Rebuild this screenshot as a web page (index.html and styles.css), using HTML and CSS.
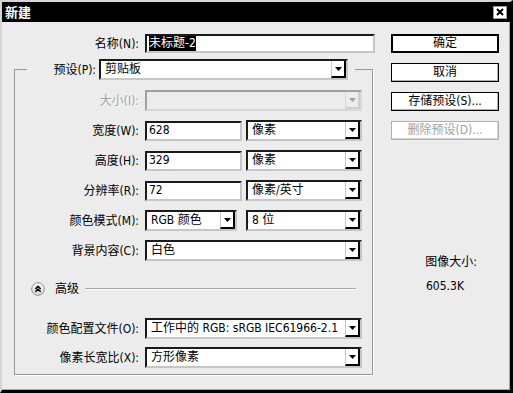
FILE: index.html
```html
<!DOCTYPE html>
<html lang="zh">
<head>
    <meta charset="UTF-8">
    <title>新建</title>
    <link rel="stylesheet" href="styles.css">
</head>
<body>
    <div class="window">
        <div class="titlebar">
            <span class="title">新建</span>
            <span class="close">
                <svg width="8" height="8" viewBox="0 0 8 8"><path d="M1 1L7 7M7 1L1 7" stroke="#000" stroke-width="2"/></svg>
            </span>
        </div>
        <div class="content">
            <div class="main">
                <div class="name-row">
                    <span class="label">名称(N):</span>
                    <div class="field name-field"><span class="selected">未标题-2</span></div>
                </div>
                <fieldset class="group">
                    <legend class="preset">
                        <span class="label preset-label">预设(P):</span>
                        <div class="field select preset-select">
                            <span class="value">剪贴板</span>
                            <span class="arrow"><svg width="7" height="4" viewBox="0 0 7 4"><path d="M0 0H7L3.5 4Z" fill="#000"/></svg></span>
                        </div>
                    </legend>
                    <div class="rows">
                        <div class="row">
                            <span class="label disabled">大小(I):</span>
                            <div class="field select wide off">
                                <span class="value"></span>
                                <span class="arrow"><svg width="7" height="4" viewBox="0 0 7 4"><path d="M0 0H7L3.5 4Z" fill="#a0a0a0"/></svg></span>
                            </div>
                        </div>
                        <div class="row">
                            <span class="label">宽度(W):</span>
                            <div class="field num"><span class="value">628</span></div>
                            <div class="field select unit">
                                <span class="value">像素</span>
                                <span class="arrow"><svg width="7" height="4" viewBox="0 0 7 4"><path d="M0 0H7L3.5 4Z" fill="#000"/></svg></span>
                            </div>
                        </div>
                        <div class="row">
                            <span class="label">高度(H):</span>
                            <div class="field num"><span class="value">329</span></div>
                            <div class="field select unit">
                                <span class="value">像素</span>
                                <span class="arrow"><svg width="7" height="4" viewBox="0 0 7 4"><path d="M0 0H7L3.5 4Z" fill="#000"/></svg></span>
                            </div>
                        </div>
                        <div class="row">
                            <span class="label">分辨率(R):</span>
                            <div class="field num"><span class="value">72</span></div>
                            <div class="field select unit">
                                <span class="value">像素/英寸</span>
                                <span class="arrow"><svg width="7" height="4" viewBox="0 0 7 4"><path d="M0 0H7L3.5 4Z" fill="#000"/></svg></span>
                            </div>
                        </div>
                        <div class="row">
                            <span class="label">颜色模式(M):</span>
                            <div class="field select mode">
                                <span class="value">RGB 颜色</span>
                                <span class="arrow"><svg width="7" height="4" viewBox="0 0 7 4"><path d="M0 0H7L3.5 4Z" fill="#000"/></svg></span>
                            </div>
                            <div class="field select unit">
                                <span class="value">8 位</span>
                                <span class="arrow"><svg width="7" height="4" viewBox="0 0 7 4"><path d="M0 0H7L3.5 4Z" fill="#000"/></svg></span>
                            </div>
                        </div>
                        <div class="row">
                            <span class="label">背景内容(C):</span>
                            <div class="field select wide">
                                <span class="value">白色</span>
                                <span class="arrow"><svg width="7" height="4" viewBox="0 0 7 4"><path d="M0 0H7L3.5 4Z" fill="#000"/></svg></span>
                            </div>
                        </div>
                    </div>
                    <div class="advanced">
                        <span class="toggle">
                            <svg width="14" height="14" viewBox="0 0 14 14">
                                <defs>
                                    <linearGradient id="tg" x1="0" y1="0" x2="0" y2="1">
                                        <stop offset="0" stop-color="#ffffff"/>
                                        <stop offset="1" stop-color="#d6d6d6"/>
                                    </linearGradient>
                                </defs>
                                <circle cx="7" cy="7" r="6.3" fill="url(#tg)" stroke="#8c8c8c" stroke-width="1"/>
                                <path d="M4.3 7L7 4.4L9.7 7M4.3 9.8L7 7.2L9.7 9.8" fill="none" stroke="#000" stroke-width="1.5"/>
                            </svg>
                        </span>
                        <span class="adv-text">高级</span>
                        <span class="adv-line"></span>
                    </div>
                    <div class="rows lower">
                        <div class="row">
                            <span class="label">颜色配置文件(O):</span>
                            <div class="field select wide">
                                <span class="value">工作中的 RGB: sRGB IEC61966-2.1</span>
                                <span class="arrow"><svg width="7" height="4" viewBox="0 0 7 4"><path d="M0 0H7L3.5 4Z" fill="#000"/></svg></span>
                            </div>
                        </div>
                        <div class="row">
                            <span class="label">像素长宽比(X):</span>
                            <div class="field select wide">
                                <span class="value">方形像素</span>
                                <span class="arrow"><svg width="7" height="4" viewBox="0 0 7 4"><path d="M0 0H7L3.5 4Z" fill="#000"/></svg></span>
                            </div>
                        </div>
                    </div>
                </fieldset>
            </div>
            <div class="side">
                <div class="btn default">确定</div>
                <div class="btn">取消</div>
                <div class="btn">存储预设(S)...</div>
                <div class="btn disabled">删除预设(D)...</div>
                <div class="info">
                    <div class="info-title">图像大小:</div>
                    <div class="info-size">605.3K</div>
                </div>
            </div>
        </div>
    </div>
</body>
</html>
```

FILE: styles.css
```css
* {
    margin: 0;
    padding: 0;
    box-sizing: border-box;
}
body {
    background: #ececec;
    font-family: "DejaVu Sans Condensed", "DejaVu Sans", "Noto Sans CJK SC", sans-serif;
    font-stretch: condensed;
    font-size: 12px;
    color: #000;
}
.window {
    width: 513px;
    height: 393px;
    background: #ececec;
    border-style: solid;
    border-width: 2px 3px 3px 2px;
    border-color: #d6d6d6 #000 #000 #d6d6d6;
    box-shadow: inset -1px -1px 0 #a8a8a8;
}
.titlebar {
    height: 20px;
    background: #000;
    display: flex;
    align-items: center;
    justify-content: space-between;
    padding: 0 3px 0 3px;
}
.title {
    color: #fff;
    font-weight: bold;
    font-size: 13px;
    line-height: 20px;
    font-family: "Noto Sans CJK SC", sans-serif;
}
.close {
    width: 14px;
    height: 13px;
    background: #fff;
    border: 1px solid #9a9a9a;
    display: flex;
    align-items: center;
    justify-content: center;
}
.content {
    display: flex;
    padding: 12px 0 0 12px;
}
.main {
    width: 361px;
}
.label {
    display: inline-block;
    text-align: right;
    line-height: 16px;
    white-space: nowrap;
}
.label.disabled {
    color: #a0a0a0;
    text-shadow: 1px 1px 0 #fff;
}
.name-row {
    display: flex;
    align-items: center;
    height: 19px;
}
.name-row .label {
    width: 125px;
    margin-right: 6px;
}
.field {
    height: 21px;
    background: #fff;
    border-style: solid;
    border-width: 2px;
    border-color: #1a1a1a #c6c6c6 #c6c6c6 #1a1a1a;
    display: flex;
    align-items: center;
    line-height: 15px;
    white-space: nowrap;
    overflow: hidden;
}
.name-field {
    width: 230px;
    height: 19px;
    padding-left: 2px;
}
.selected {
    background: #000;
    color: #fff;
    line-height: 15px;
}
.value {
    flex: 1;
    padding-left: 4px;
    overflow: hidden;
}
.select .arrow {
    width: 15px;
    height: 100%;
    background: #fff;
    border-left: 1px solid #c8c8c8;
    border-right: 2px solid #000;
    border-bottom: 2px solid #000;
    display: flex;
    align-items: center;
    justify-content: center;
}
.group {
    width: 359px;
    margin-top: 6px;
    border: 1px solid #999;
    padding: 0 0 6px 0;
    box-shadow: 1px 1px 0 #fff;
}
.preset {
    margin-left: 12px;
    width: 328px;
    display: flex;
    align-items: center;
    padding-right: 7px;
    background: #ececec;
}
.preset-label {
    width: 69px;
    margin-right: 3px;
}
.preset-select {
    width: 249px;
}
.rows {
    display: flex;
    flex-direction: column;
    gap: 9px;
    padding-top: 10px;
}
.rows.lower {
    gap: 8px;
    padding-top: 22px;
}
.row {
    display: flex;
    align-items: center;
    height: 21px;
}
.row .label {
    width: 124px;
    margin-right: 6px;
}
.wide {
    width: 217px;
}
.num {
    width: 97px;
    height: 20px;
    margin-right: 4px;
}
.num .value {
    padding-left: 2px;
}
.unit {
    width: 116px;
}
.mode {
    width: 92px;
    margin-right: 9px;
}
.off {
    background: #ececec;
    border-color: #a0a0a0 #d8d8d8 #d8d8d8 #a0a0a0;
}
.off .arrow {
    background: #ececec;
    border-left: 1px solid #d8d8d8;
    border-right: 2px solid #d0d0d0;
    border-bottom: 2px solid #d0d0d0;
}
.advanced {
    display: flex;
    align-items: center;
    height: 14px;
    margin-top: 21px;
    padding-left: 16px;
}
.toggle {
    width: 14px;
    height: 14px;
    display: flex;
}
.adv-text {
    margin-left: 10px;
    line-height: 16px;
}
.adv-line {
    flex: 1;
    height: 2px;
    margin: 0 16px 0 6px;
    border-top: 1px solid #a8a8a8;
    border-bottom: 1px solid #fff;
}
.side {
    width: 108px;
    margin-left: 16px;
    display: flex;
    flex-direction: column;
    gap: 10px;
}
.btn {
    height: 19px;
    background: #fff;
    border: 1px solid #000;
    box-shadow: inset -1px -1px 0 #b0b0b0;
    text-align: center;
    line-height: 16px;
}
.btn.default {
    border: 2px solid #000;
    box-shadow: none;
    line-height: 15px;
}
.btn.disabled {
    color: #a0a0a0;
    border-color: #b0b0b0;
    box-shadow: inset -1px -1px 0 #d4d4d4;
    text-shadow: 1px 1px 0 #fff;
}
.info {
    margin-top: 104px;
    width: 120px;
    text-align: center;
    line-height: 16px;
}
.info-size {
    margin-top: 8px;
    padding-right: 12px;
}
```
